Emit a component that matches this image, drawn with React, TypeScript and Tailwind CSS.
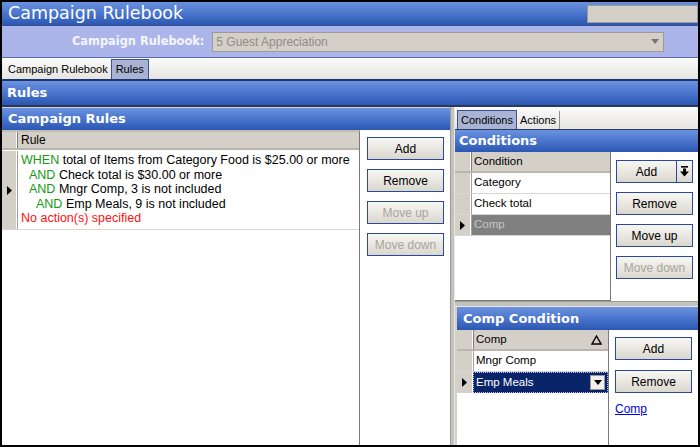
import React from "react";

const HDR = "bg-gradient-to-b from-[#6a92df] via-[#4a75cc] to-[#2b57b3]";
const BODY = { fontFamily: '"Liberation Sans", Arial, sans-serif' } as const;
const VERD = { fontFamily: '"DejaVu Sans", Verdana, sans-serif' } as const;

function Btn({ children, disabled }: { children: React.ReactNode; disabled?: boolean }) {
  return (
    <div
      className={
        "flex items-center justify-center h-[23px] w-[77px] border border-[#2a4a98] bg-gradient-to-b from-[#f8f7f3] to-[#dad7ce] text-[12px] " +
        (disabled ? "text-[#a8a59c]" : "text-black")
      }
    >
      {children}
    </div>
  );
}

function RowArrow() {
  return (
    <svg width="5" height="9" viewBox="0 0 5 9">
      <polygon points="0,0 5,4.5 0,9" fill="#000" />
    </svg>
  );
}

function GridRow({ label, selected }: { label: string; selected?: boolean }) {
  return (
    <div className="flex h-[21px] border-b border-[#d8d6d0]">
      <div className="w-[16px] bg-[#d4d0c8] border-r border-[#ffffff] flex items-center justify-center">
        {selected && <RowArrow />}
      </div>
      <div
        className={
          "flex-1 flex items-center pl-[2px] text-[11.5px] border-l border-[#a0a0a0] " +
          (selected ? "bg-[#808080] text-[#c6c6c6]" : "bg-white text-black")
        }
      >
        {label}
      </div>
    </div>
  );
}

function HeaderRow({ label, sort }: { label: string; sort?: boolean }) {
  return (
    <div className="flex h-[21px] bg-[#d4d0c8] border-b-2 border-[#b9b6ae]">
      <div className="w-[16px] border-r border-white" />
      <div className="flex-1 flex items-center pl-[2px] text-[11.5px] border-l border-[#808080] justify-between pr-[6px]">
        <span>{label}</span>
        {sort && (
          <svg width="11" height="10" viewBox="0 0 11 10">
            <polygon points="5.5,1 10,9 1,9" fill="none" stroke="#000" strokeWidth="1.4" />
          </svg>
        )}
      </div>
    </div>
  );
}

export default function App() {
  return (
    <div
      className="w-[700px] h-[447px] bg-black pt-[2px] pl-[2px] pr-[2px] pb-[2px] overflow-hidden"
      style={BODY}
    >
      <div className="w-full h-full flex flex-col bg-[#d4d0c8]">
        {/* Title bar */}
        <div className={"h-[23px] flex justify-between " + HDR}>
          <div className="pl-[6px] text-[17.5px] leading-[22px] text-white" style={VERD}>
            Campaign Rulebook
          </div>
          <div className="mt-[3px] w-[111px] h-[18px] bg-[#d4d0c8] border border-[#9a9a9a]" />
        </div>
        <div className="h-[1px] bg-[#33508e]" />
        {/* Rulebook selector */}
        <div className="h-[31px] bg-[#abb5ea] flex items-center pl-[70px] gap-[8px]">
          <div className="text-[11.4px] font-bold text-[#f4f5fc]" style={VERD}>
            Campaign Rulebook:
          </div>
          <div className="w-[452px] h-[20px] bg-[#d4d0c8] border border-[#9d9b95] flex items-center justify-between pl-[3px] pr-[4px]">
            <span className="text-[12px] text-[#8e8c86]">5 Guest Appreciation</span>
            <svg width="8" height="5" viewBox="0 0 8 5">
              <polygon points="0,0 8,0 4,5" fill="#77756f" />
            </svg>
          </div>
        </div>
        <div className="h-[1px] bg-[#5a6bb0]" />
        {/* Tabs */}
        <div className="h-[21px] bg-gradient-to-b from-[#fafafa] to-[#e6e5e0] flex items-end pl-[3px]">
          <div className="h-[19px] px-[3px] flex items-center text-[11px] text-black">
            Campaign Rulebook
          </div>
          <div className="h-[20px] px-[4px] flex items-center text-[11px] text-black bg-[#a9b3d3] border border-b-0 border-[#3f5290]">
            Rules
          </div>
        </div>
        <div className="h-[2px] bg-[#1d3470]" />
        {/* Rules header */}
        <div className={"h-[24px] flex items-center pl-[5px] " + HDR}>
          <span className="text-[13px] font-bold text-white" style={VERD}>
            Rules
          </span>
        </div>
        <div className="h-[2px] bg-[#2b3a5c]" />
        {/* Main */}
        <div className="flex-1 flex min-h-0">
          {/* Left panel */}
          <div className="w-[448px] flex flex-col">
            <div className={"mt-[1px] h-[22px] flex items-center pl-[6px] " + HDR}>
              <span className="text-[13px] font-bold text-white" style={VERD}>
                Campaign Rules
              </span>
            </div>
            <div className="flex-1 flex min-h-0 bg-white">
              <div className="w-[358px] flex flex-col border-r border-[#7a7a7a] border-t-2 border-t-[#c0bdb5]">
                <div className="flex h-[18px] bg-[#d4d0c8] border-b-2 border-[#b9b6ae]">
                  <div className="w-[15px] border-r border-white" />
                  <div className="flex-1 flex items-center pl-[3px] text-[12px] border-l border-[#808080]">
                    Rule
                  </div>
                </div>
                <div className="flex h-[79px] mt-[1px] border-b border-[#d8d6d0]">
                  <div className="w-[15px] bg-[#d4d0c8] border-r border-white flex items-center justify-center">
                    <RowArrow />
                  </div>
                  <div className="flex-1 flex flex-col pl-[3px] pt-[2px] text-[12.5px] leading-[14.5px] border-l border-[#a0a0a0] whitespace-nowrap">
                    <div>
                      <span className="text-[#159a15]">WHEN</span> total of Items from Category Food is $25.00 or more
                    </div>
                    <div className="pl-[8px]">
                      <span className="text-[#159a15]">AND</span> Check total is $30.00 or more
                    </div>
                    <div className="pl-[8px]">
                      <span className="text-[#159a15]">AND</span> Mngr Comp, 3 is not included
                    </div>
                    <div className="pl-[15px]">
                      <span className="text-[#159a15]">AND</span> Emp Meals, 9 is not included
                    </div>
                    <div className="text-[#ff1010]">No action(s) specified</div>
                  </div>
                </div>
              </div>
              <div className="flex-1 flex flex-col items-center pt-[7px] gap-[9px] pl-[1px]">
                <Btn>Add</Btn>
                <Btn>Remove</Btn>
                <Btn disabled>Move up</Btn>
                <Btn disabled>Move down</Btn>
              </div>
            </div>
          </div>
          {/* Vertical splitter */}
          <div className="w-[5px] bg-[#c4c2bc] border-l border-[#9c9a94] border-r border-r-[#e8e6e0]" />
          {/* Right panel */}
          <div className="flex-1 flex flex-col min-w-0">
            <div className="h-[22px] flex items-end pl-[2px] bg-gradient-to-b from-[#fafafa] to-[#e6e5e0]">
              <div className="h-[19px] px-[3px] flex items-center text-[11px] bg-[#a9b3d3] border border-b-0 border-[#3f5290]">
                Conditions
              </div>
              <div className="h-[18px] px-[3px] flex items-center text-[11px] border-r border-[#909090]">
                Actions
              </div>
            </div>
            <div className={"h-[23px] flex items-center pl-[4px] border-t border-[#2b3a5c] " + HDR}>
              <span className="text-[13px] font-bold text-white" style={VERD}>
                Conditions
              </span>
            </div>
            <div className="h-[149px] flex bg-white">
              <div className="w-[156px] flex flex-col border-r border-[#7a7a7a] border-b border-b-[#7a7a7a]">
                <HeaderRow label="Condition" />
                <GridRow label="Category" />
                <GridRow label="Check total" />
                <GridRow label="Comp" selected />
              </div>
              <div className="flex-1 flex flex-col items-center pt-[8px] gap-[9px]">
                <div className="flex h-[23px] w-[77px] border border-[#2a4a98] bg-gradient-to-b from-[#f8f7f3] to-[#dad7ce] text-[12px]">
                  <div className="flex-1 flex items-center justify-center">Add</div>
                  <div className="w-[16px] border-l border-[#2a4a98] flex items-center justify-center">
                    <svg width="9" height="11" viewBox="0 0 9 11">
                      <rect x="1" y="0" width="7" height="1.6" fill="#000" />
                      <rect x="3" y="2.5" width="3" height="3.5" fill="#000" />
                      <polygon points="0,5.5 9,5.5 4.5,10.5" fill="#000" />
                    </svg>
                  </div>
                </div>
                <Btn>Remove</Btn>
                <Btn>Move up</Btn>
                <Btn disabled>Move down</Btn>
              </div>
            </div>
            {/* Horizontal splitter */}
            <div className="h-[6px] bg-[#c4c2bc] border-t border-[#9c9a94] border-b border-b-[#e8e6e0]" />
            <div className={"h-[23px] flex items-center pl-[6px] ml-[2px] " + HDR}>
              <span className="text-[13px] font-bold text-white" style={VERD}>
                Comp Condition
              </span>
            </div>
            <div className="flex-1 flex bg-white ml-[2px]">
              <div className="w-[152px] flex flex-col border-r border-[#7a7a7a]">
                <HeaderRow label="Comp" sort />
                <GridRow label="Mngr Comp" />
                <div className="flex h-[21px]">
                  <div className="w-[16px] bg-[#d4d0c8] border-r border-white flex items-center justify-center">
                    <RowArrow />
                  </div>
                  <div className="flex-1 flex items-center justify-between bg-[#0a246a] text-white text-[11.5px] pl-[2px] pr-[2px] border border-dotted border-[#c0c0ff]">
                    <span>Emp Meals</span>
                    <div className="w-[15px] h-[15px] bg-[#f0efea] border border-[#9a9890] flex items-center justify-center">
                      <svg width="8" height="5" viewBox="0 0 8 5">
                        <polygon points="0,0 8,0 4,5" fill="#000" />
                      </svg>
                    </div>
                  </div>
                </div>
              </div>
              <div className="flex-1 flex flex-col pt-[7px] pl-[6px] gap-[10px]">
                <Btn>Add</Btn>
                <Btn>Remove</Btn>
                <span className="-mt-[3px] text-[12px] text-[#0000ee] underline">Comp</span>
              </div>
            </div>
          </div>
        </div>
      </div>
    </div>
  );
}
